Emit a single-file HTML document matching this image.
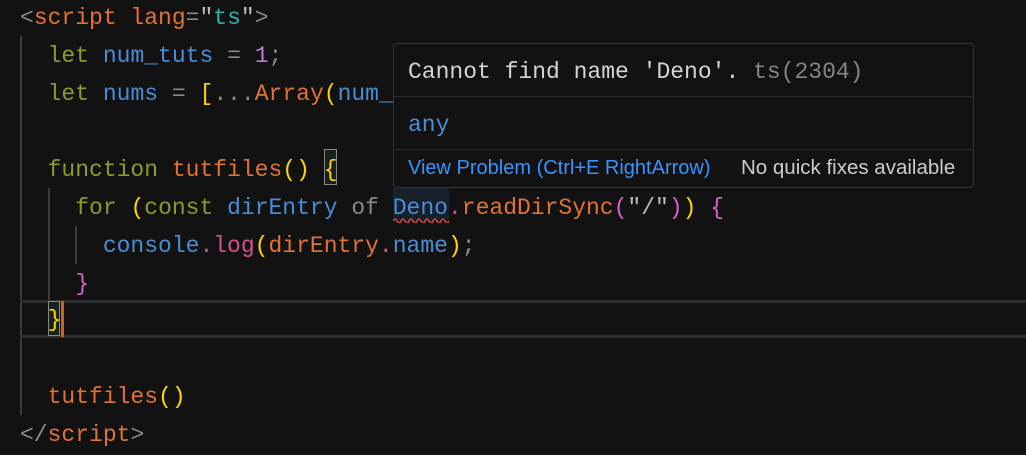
<!DOCTYPE html>
<html><head><style>
body{margin:0;background:#121212;width:1026px;height:455px;overflow:hidden;position:relative;font-family:"Liberation Mono",monospace;}
.l{position:absolute;left:20px;font-size:23px;line-height:38px;white-space:pre;height:38px;}
.k{color:#8a9a2e}.v{color:#4a8dd4}.o{color:#e07236}.g{color:#8a8a8a}.p{color:#b57be0}.y{color:#ffd400}.m{color:#d860d0}.t{color:#2fb3a6}.pk{color:#d4508c}.w{color:#bbbbbb}
.guide{position:absolute;width:2px;background:#3c3c3c}
#tip{position:absolute;left:393px;top:43px;width:579px;height:143px;border:1px solid #333;border-radius:4px;background:#121212;}
.sep{position:absolute;left:0;right:0;height:1px;background:#2a2a2a}
.s{font-family:"Liberation Sans",sans-serif;}
</style></head><body>
<div class="guide" style="left:20px;top:36px;height:379px"></div>
<div class="guide" style="left:48px;top:188px;height:112px"></div>
<div class="guide" style="left:75px;top:226px;height:38px"></div>
<div style="position:absolute;left:20px;right:0;top:300px;height:32px;border-top:3px solid #2e2e2e;border-bottom:3px solid #2e2e2e"></div>
<div style="position:absolute;left:48px;top:301px;width:12px;height:35px;border:1px solid #888;box-sizing:border-box;background:#16221a"></div>
<div style="position:absolute;left:61px;top:301px;width:3px;height:36px;background:#d06020"></div>
<div style="position:absolute;left:324px;top:149px;width:13px;height:36px;border:1px solid #888;box-sizing:border-box;background:#16221a"></div>
<div style="position:absolute;left:393px;top:188px;width:56px;height:34px;background:#18202c"></div>
<svg style="position:absolute;left:393px;top:217px" width="56" height="6"><path d="M0 4 Q2 0 4 4 T8 4 T12 4 T16 4 T20 4 T24 4 T28 4 T32 4 T36 4 T40 4 T44 4 T48 4 T52 4 T56 4" fill="none" stroke="#f04848" stroke-width="1.3"/></svg>

<div class="l" style="top:-1px"><span class="g">&lt;</span><span class="o">script lang</span><span class="g">=</span><span class="w">"</span><span class="t">ts</span><span class="w">"</span><span class="g">&gt;</span></div>
<div class="l" style="top:37px">  <span class="k">let</span> <span class="v">num_tuts</span> <span class="g">=</span> <span class="p">1</span><span class="g">;</span></div>
<div class="l" style="top:75px">  <span class="k">let</span> <span class="v">nums</span> <span class="g">=</span> <span class="y">[</span><span class="g">...</span><span class="o">Array</span><span class="y">(</span><span class="v">num_tuts</span></div>
<div class="l" style="top:151px">  <span class="k">function</span> <span class="o">tutfiles</span><span class="y">()</span> <span class="y">{</span></div>
<div class="l" style="top:189px">    <span class="k">for</span> <span class="y">(</span><span class="k">const</span> <span class="v">dirEntry</span> <span class="g">of</span> <span class="v">Deno</span><span class="pk">.</span><span class="o">readDirSync</span><span class="m">(</span><span class="w">"/"</span><span class="m">)</span><span class="y">)</span> <span class="m">{</span></div>
<div class="l" style="top:227px">      <span class="v">console</span><span class="pk">.log</span><span class="y">(</span><span class="o">dirEntry</span><span class="pk">.</span><span class="v">name</span><span class="y">)</span><span class="g">;</span></div>
<div class="l" style="top:265px">    <span class="m">}</span></div>
<div class="l" style="top:301px">  <span class="y">}</span></div>
<div class="l" style="top:378px">  <span class="o">tutfiles</span><span class="y">()</span></div>
<div class="l" style="top:416px"><span class="g">&lt;/</span><span class="o">script</span><span class="g">&gt;</span></div>

<div id="tip">
 <div style="position:absolute;left:14px;top:9px;font-size:23px;line-height:38px;white-space:pre;color:#d4d4d4">Cannot find name 'Deno'. <span style="color:#858585">ts(2304)</span></div>
 <div class="sep" style="top:52px"></div>
 <div style="position:absolute;left:14px;top:62px;font-size:23px;line-height:38px;color:#4a8dd4">any</div>
 <div class="sep" style="top:105px"></div>
 <div class="s" style="position:absolute;left:14px;top:110px;font-size:20px;line-height:28px;color:#3794ff;white-space:pre">View Problem (Ctrl+E RightArrow)</div>
 <div class="s" style="position:absolute;left:347px;top:110px;font-size:20.5px;line-height:28px;color:#cccccc;white-space:pre">No quick fixes available</div>
</div>
</body></html>
